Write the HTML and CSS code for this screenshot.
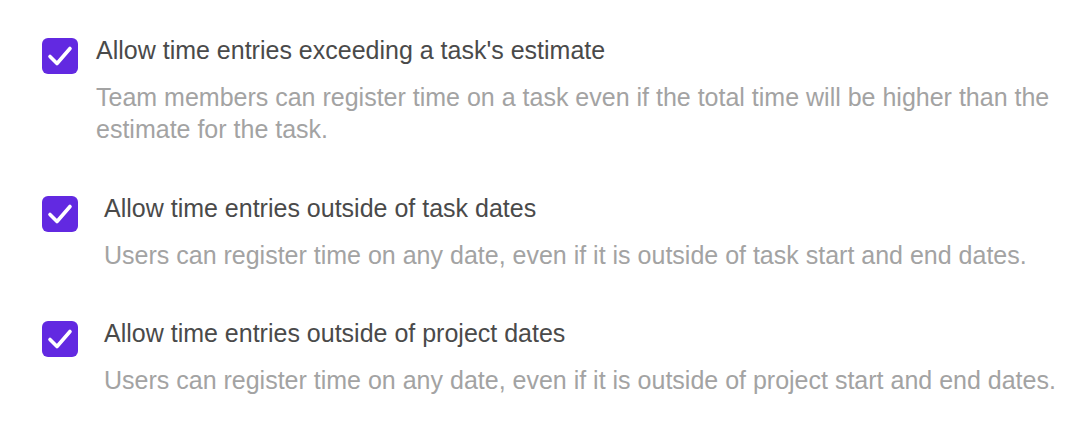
FILE: index.html
```html
<!DOCTYPE html>
<html lang="en">
<head>
    <meta charset="UTF-8">
    <meta name="viewport" content="width=device-width, initial-scale=1.0">
    <title>Time registration settings</title>
    <link rel="stylesheet" href="styles.css">
</head>
<body>
    <main class="settings">
        <div class="option option-first">
            <span class="checkbox">
                <svg viewBox="0 0 36 36" width="36" height="36"><path d="M8 18.5 L15 25.5 L28 10.5" /></svg>
            </span>
            <div class="option-text">
                <div class="option-title">Allow time entries exceeding a task's estimate</div>
                <div class="option-desc">Team members can register time on a task even if the total time will be higher than the estimate for the task.</div>
            </div>
        </div>
        <div class="option">
            <span class="checkbox">
                <svg viewBox="0 0 36 36" width="36" height="36"><path d="M8 18.5 L15 25.5 L28 10.5" /></svg>
            </span>
            <div class="option-text">
                <div class="option-title">Allow time entries outside of task dates</div>
                <div class="option-desc">Users can register time on any date, even if it is outside of task start and end dates.</div>
            </div>
        </div>
        <div class="option">
            <span class="checkbox">
                <svg viewBox="0 0 36 36" width="36" height="36"><path d="M8 18.5 L15 25.5 L28 10.5" /></svg>
            </span>
            <div class="option-text">
                <div class="option-title">Allow time entries outside of project dates</div>
                <div class="option-desc">Users can register time on any date, even if it is outside of project start and end dates.</div>
            </div>
        </div>
    </main>
</body>
</html>
```

FILE: styles.css
```css
body {
    margin: 0;
    background: #ffffff;
    font-family: "Liberation Sans", Arial, sans-serif;
}

.settings {
    display: flex;
    flex-direction: column;
    gap: 46.5px;
    padding: 34px 20px 0 42px;
}

.option {
    display: flex;
    align-items: flex-start;
    gap: 26px;
}

.option-first {
    gap: 18px;
}

.checkbox {
    flex: none;
    width: 36px;
    height: 36px;
    margin-top: 4px;
    border-radius: 6px;
    background: #6229e1;
}

.checkbox svg {
    display: block;
}

.checkbox path {
    fill: none;
    stroke: #ffffff;
    stroke-width: 3.6;
    stroke-linecap: round;
    stroke-linejoin: round;
}

.option-title {
    font-size: 25px;
    line-height: 32px;
    color: #4a4a4a;
}

.option-desc {
    margin-top: 15px;
    font-size: 25px;
    line-height: 32px;
    color: #a3a3a3;
}
```
